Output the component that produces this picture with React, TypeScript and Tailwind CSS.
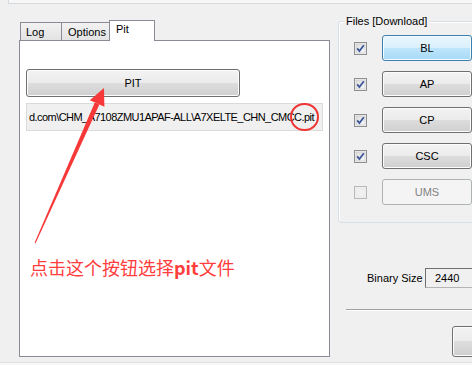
import React from 'react';

const btnGray =
  'bg-[linear-gradient(#f3f3f3_0%,#ebebeb_50%,#dddddd_50%,#cfcfcf_100%)] border border-[#707070] rounded-[3px] shadow-[inset_0_0_0_1px_#fcfcfc]';
const btnHot =
  'bg-[linear-gradient(#eaf6fd_0%,#d9f0fc_50%,#bee6fd_50%,#a7d9f5_100%)] border border-[#3c7fb1] rounded-[3px] shadow-[inset_0_0_0_1px_#f4fbff]';

// 复选框
const CheckBox: React.FC<{ checked: boolean }> = ({ checked }) => (
  <svg width="13" height="13" viewBox="0 0 13 13" className="shrink-0">
    <defs>
      <linearGradient id="cbg" x1="0" y1="0" x2="1" y2="1">
        <stop offset="0" stopColor="#dcdcdc" />
        <stop offset="1" stopColor="#fafafa" />
      </linearGradient>
    </defs>
    <rect x="0.5" y="0.5" width="12" height="12" fill="#f4f4f4" stroke={checked ? '#8f8f8f' : '#b8b8b8'} />
    <rect x="2" y="2" width="9" height="9" fill={checked ? 'url(#cbg)' : '#f0f0f0'} stroke={checked ? '#c4c4c4' : '#e2e2e2'} strokeWidth="0.6" />
    {checked && (
      <path d="M3.2 6.4 L5.4 9 L9.8 3.2" fill="none" stroke="#3f579c" strokeWidth="1.8" />
    )}
  </svg>
);

const files = [
  { name: 'BL', checked: true, hot: true },
  { name: 'AP', checked: true },
  { name: 'CP', checked: true },
  { name: 'CSC', checked: true },
  { name: 'UMS', checked: false, disabled: true },
];

const App: React.FC = () => {
  return (
    <div className="relative w-[472px] h-[365px] overflow-hidden bg-[#f0f0f0] font-['Liberation_Sans',Arial,sans-serif] text-[11px] text-black">
      {/* 顶部控件边缘 */}
      <div className="ml-[8px] h-[4px] border-l border-b border-[#d6dbdf] bg-[#f7f7f7]" />

      <div className="flex h-[353px]">
        {/* 左侧标签页 */}
        <div className="ml-[19px] w-[315px] flex flex-col">
          <div className="mt-[16px] h-[20px] flex items-end pl-[1px]">
            <div className="w-[42px] h-[18px] border border-b-0 border-[#898c95] bg-linear-to-b from-[#f2f2f2] to-[#e3e3e3] pl-[5px] flex items-center pt-[2px]">
              Log
            </div>
            <div className="w-[48px] h-[18px] border border-b-0 border-l-0 border-[#898c95] bg-linear-to-b from-[#f2f2f2] to-[#e3e3e3] pl-[6px] flex items-center pt-[2px]">
              Options
            </div>
            <div className="relative z-10 -ml-px -mb-px w-[46px] h-[21px] border border-b-0 border-[#898c95] bg-white pl-[6px] flex items-center pb-[3px]">
              Pit
            </div>
          </div>
          <div className="relative h-[317px] border border-[#898c95] bg-white px-[6px]">
            <div className={`mt-[28px] w-[214px] h-[28px] flex items-center justify-center ${btnGray}`}>
              PIT
            </div>
            <div className="mt-[6px] w-[297px] h-[28px] border border-[#dadada] bg-[#f0f0f0] pl-[2px] flex items-center whitespace-nowrap tracking-[-0.55px]">
              <span>d.com\CHM_A7108ZMU1APAF-ALL\A7XELTE_CHN_CMC</span>
              <span className="relative">
                C.pit
                <span className="absolute -left-[4px] -right-[5px] -top-[6px] -bottom-[6px] rounded-[50%] border-2 border-[#f03535]" />
              </span>
            </div>
            <div className="mt-[124px] pl-[4px] text-[18px] leading-[24px] text-[#ff3d3d] font-['Noto_Sans_CJK_SC','Noto_Sans',sans-serif]">
              点击这个按钮选择<b className="font-semibold">pit</b>文件
            </div>
          </div>
        </div>

        {/* 右侧文件区 */}
        <div className="flex-1 flex flex-col">
          <div className="relative ml-[8px] mt-[17px] w-[150px] h-[202px] border border-[#d5dfe5] rounded-[3px] pt-[13px] shadow-[inset_1px_1px_0_#fff]">
            <span className="absolute -top-[8px] left-[5px] px-[2px] bg-[#f0f0f0] leading-[14px]">Files [Download]</span>
            <div className="flex flex-col gap-[10px]">
              {files.map((f) => (
                <div key={f.name} className="flex items-center h-[26px]">
                  <div className="ml-[15px]">
                    <CheckBox checked={f.checked} />
                  </div>
                  <div
                    className={`ml-[15px] w-[90px] h-[26px] flex items-center justify-center shrink-0 ${
                      f.hot
                        ? btnHot
                        : f.disabled
                        ? 'border border-[#adb2b5] rounded-[3px] bg-[#f4f4f4] text-[#838383]'
                        : btnGray
                    }`}
                  >
                    {f.name}
                  </div>
                </div>
              ))}
            </div>
          </div>

          <div className="mt-[45px] flex items-center h-[20px]">
            <span className="ml-[37px] w-[58px] shrink-0">Binary Size</span>
            <div className="w-[60px] h-[20px] shrink-0 border border-[#b5b5b5] border-t-[#6f6f6f] border-l-[#6f6f6f] bg-[#f0f0f0] pl-[9px] flex items-center">
              2440
            </div>
          </div>

          <div className="mt-[21px] ml-[16px] h-0 border-t border-b border-t-[#a0a0a0] border-b-white" />

          <div className={`mt-[15px] ml-[122px] w-[40px] h-[31px] shrink-0 ${btnGray}`} />
        </div>
      </div>

      <div className="mt-[5px] h-[3px] border-t border-[#e0e0e0] bg-[#f8f8f8]" />

      {/* 红色箭头标注 */}
      <svg className="absolute left-0 top-0 pointer-events-none" width="472" height="365" viewBox="0 0 472 365">
        <polygon points="34.6,242.8 35.6,243.2 99.4,104.5 94.8,102.5" fill="#f73838" />
        <polygon points="104,88 89.8,100.2 104.4,106.8" fill="#f73838" />
      </svg>
    </div>
  );
};

export default App;
